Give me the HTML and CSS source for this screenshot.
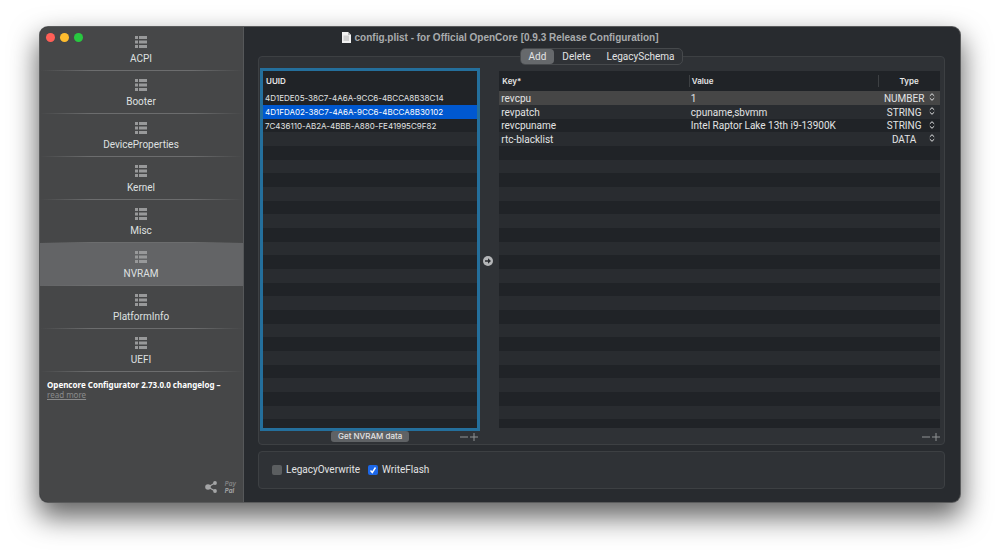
FILE: index.html
```
<!DOCTYPE html>
<html lang="en">
<head>
<meta charset="utf-8">
<meta name="viewport" content="width=device-width, initial-scale=1">
<title>config.plist - for Official OpenCore</title>
<link rel="stylesheet" href="styles.css">
</head>
<body>
<svg class="defs" aria-hidden="true">
  <symbol id="list" viewBox="0 0 12 12"><path d="M0 0h3v3H0zM4 0h8v3H4zM0 4.5h3v3H0zM4 4.5h8v3H4zM0 9h3v3H0zM4 9h8v3H4z" fill="currentColor"/></symbol>
  <symbol id="updown" viewBox="0 0 6 8"><path d="M.8 2.8 3 .7l2.2 2.1M.8 5.2 3 7.3l2.2-2.1" fill="none" stroke="currentColor" stroke-width="1"/></symbol>
  <symbol id="minus" viewBox="0 0 8 8"><path d="M0 4h8" stroke="currentColor" fill="none"/></symbol>
  <symbol id="plus" viewBox="0 0 8 8"><path d="M0 4h8M4 0v8" stroke="currentColor" fill="none"/></symbol>
</svg>
<div class="window">
  <aside class="sidebar">
    <nav class="nav">
      <a class="nav-item" href="#acpi"><svg class="nav-icon"><use href="#list"/></svg>ACPI</a>
      <a class="nav-item" href="#booter"><svg class="nav-icon"><use href="#list"/></svg>Booter</a>
      <a class="nav-item" href="#device"><svg class="nav-icon"><use href="#list"/></svg>DeviceProperties</a>
      <a class="nav-item" href="#kernel"><svg class="nav-icon"><use href="#list"/></svg>Kernel</a>
      <a class="nav-item" href="#misc"><svg class="nav-icon"><use href="#list"/></svg>Misc</a>
      <a class="nav-item selected" href="#nvram" aria-current="page"><svg class="nav-icon"><use href="#list"/></svg>NVRAM</a>
      <a class="nav-item" href="#platform"><svg class="nav-icon"><use href="#list"/></svg>PlatformInfo</a>
      <a class="nav-item" href="#uefi"><svg class="nav-icon"><use href="#list"/></svg>UEFI</a>
    </nav>
    <p class="news"><strong>Opencore Configurator 2.73.0.0 changelog –</strong><a href="#changelog">read more</a></p>
    <div class="side-foot">
      <button class="bare" type="button" aria-label="Share"><svg class="share" viewBox="0 0 12 12"><path d="M10 2 3 6l7 4" fill="none" stroke="currentColor" stroke-width="1.3"/><circle cx="3" cy="6" r="2.8" fill="currentColor"/><circle cx="10" cy="2" r="1.9" fill="currentColor"/><circle cx="10" cy="10" r="1.9" fill="currentColor"/></svg></button>
      <a class="paypal" href="#paypal"><span class="dim">Pay</span><span>Pal</span></a>
    </div>
  </aside>

  <header class="titlebar">
    <div class="lights">
      <button class="light red" type="button" aria-label="Close"></button>
      <button class="light yellow" type="button" aria-label="Minimize"></button>
      <button class="light green" type="button" aria-label="Zoom"></button>
    </div>
    <h1 class="title"><svg class="doc" viewBox="0 0 9 11"><path d="M0 0h6L9 3V11H0z" fill="#f1f1f1"/><path d="M6 0 9 3H6z" fill="#b9b9b9"/><path d="M1.500 3.500h5.500v5.500h-5.500z" fill="#cfcfcf"/></svg>config.plist - for Official OpenCore [0.9.3 Release Configuration]</h1>
  </header>

  <main class="main">
    <div class="tabs" role="tablist">
      <button class="tab active" type="button" role="tab" aria-selected="true">Add</button>
      <button class="tab" type="button" role="tab" aria-selected="false">Delete</button>
      <button class="tab" type="button" role="tab" aria-selected="false">LegacySchema</button>
    </div>
    <section class="panel lists">
      <div class="list focused">
        <table class="grid">
          <thead><tr><th>UUID</th></tr></thead>
          <tbody class="uuids">
            <tr><td>4D1EDE05-38C7-4A6A-9CC6-4BCCA8B38C14</td></tr>
            <tr class="picked"><td>4D1FDA02-38C7-4A6A-9CC6-4BCCA8B30102</td></tr>
            <tr><td>7C436110-AB2A-4BBB-A880-FE41995C9F82</td></tr>
          </tbody>
        </table>
      </div>
      <button class="bare move" type="button" aria-label="Move to right"><svg class="arrow" viewBox="0 0 10 10"><circle cx="5" cy="5" r="5" fill="#b4b6b8"/><path d="M2 4.200h3V2.300L8 5 5 7.700V5.800H2z" fill="#2b2e32"/></svg></button>
      <div class="list">
        <table class="grid">
          <colgroup><col class="c-key"><col class="c-value"><col class="c-type"></colgroup>
          <thead><tr><th>Key*</th><th>Value</th><th class="type">Type</th></tr></thead>
          <tbody>
            <tr class="current"><td>revcpu</td><td>1</td><td class="type"><select aria-label="Type of revcpu"><option>NUMBER</option></select><svg class="updown"><use href="#updown"/></svg></td></tr>
            <tr><td>revpatch</td><td>cpuname,sbvmm</td><td class="type"><select aria-label="Type of revpatch"><option>STRING</option></select><svg class="updown"><use href="#updown"/></svg></td></tr>
            <tr><td>revcpuname</td><td>Intel Raptor Lake 13th i9-13900K</td><td class="type"><select aria-label="Type of revcpuname"><option>STRING</option></select><svg class="updown"><use href="#updown"/></svg></td></tr>
            <tr><td>rtc-blacklist</td><td></td><td class="type"><select aria-label="Type of rtc-blacklist"><option>DATA</option></select><svg class="updown"><use href="#updown"/></svg></td></tr>
          </tbody>
        </table>
      </div>
      <div class="list-foot">
        <button class="get" type="button">Get NVRAM data</button>
        <div class="pair">
          <button class="bare" type="button" aria-label="Remove UUID"><svg class="sign"><use href="#minus"/></svg></button>
          <button class="bare" type="button" aria-label="Add UUID"><svg class="sign"><use href="#plus"/></svg></button>
        </div>
      </div>
      <div class="list-foot last">
        <div class="pair">
          <button class="bare" type="button" aria-label="Remove key"><svg class="sign"><use href="#minus"/></svg></button>
          <button class="bare" type="button" aria-label="Add key"><svg class="sign"><use href="#plus"/></svg></button>
        </div>
      </div>
    </section>
    <section class="panel options">
      <label class="check"><input type="checkbox">LegacyOverwrite</label>
      <label class="check"><input type="checkbox" checked>WriteFlash</label>
    </section>
  </main>
</div>
</body>
</html>
```
FILE: styles.css
```
* { box-sizing: border-box; }

body {
  margin: 0;
  padding: 27px 40px 52px;
  background: #fff;
  font-family: Roboto, "Liberation Sans", sans-serif;
  font-size: 10px;
  line-height: 12px;
  color: #e2e3e4;
}

button, select, input { font: inherit; color: inherit; margin: 0; }
.defs { display: none; }
svg { display: block; }

.bare {
  display: block;
  padding: 0;
  border: 0;
  background: none;
}

.window {
  display: grid;
  grid-template-columns: 204px minmax(0, 1fr);
  grid-template-rows: 21px auto;
  border-radius: 8px;
  overflow: hidden;
  background: #282b2f;
  box-shadow: 0 0 0 1px #5a5b5c, 0 13px 28px 2px rgba(0, 0, 0, .62);
}

/* Title bar */
.titlebar {
  grid-area: 1 / 1 / 2 / 3;
  display: grid;
  grid-template-columns: 1fr auto 1fr;
  align-items: center;
}
.lights { display: flex; gap: 5px; padding-left: 6px; }
.light {
  width: 9px;
  height: 9px;
  padding: 0;
  border: 0;
  border-radius: 50%;
}
.red { background: #ff5f57; }
.yellow { background: #febc2e; }
.green { background: #28c840; }
.title {
  display: flex;
  align-items: center;
  gap: 4px;
  margin: 0;
  font-family: "Liberation Sans", Arial, sans-serif;
  font-size: 10px;
  font-weight: 700;
  color: #a9abad;
}
.doc { width: 9px; height: 11px; }

/* Sidebar */
.sidebar {
  grid-area: 1 / 1 / 3 / 2;
  display: flex;
  flex-direction: column;
  border-right: 1px solid #56585a;
  background: #464748;
}
.nav { padding-top: 1px; }
.nav-item {
  display: flex;
  flex-direction: column;
  align-items: center;
  gap: 5px;
  height: 43px;
  padding: 8px 1px 0 0;
  background: linear-gradient(90deg, transparent, #6c6d6e 25%, #6c6d6e 75%, transparent) bottom / 100% 1px no-repeat;
  color: #dfe0e0;
  text-decoration: none;
}
.nav-item.selected { background-color: #636466; }
.nav-icon { width: 12px; height: 12px; color: #98999a; }
.news {
  margin: 0;
  padding: 8px 7px;
  font-family: "Noto Sans", "Open Sans", sans-serif;
  font-size: 8px;
  line-height: 10px;
  white-space: nowrap;
}
.news strong { display: block; color: #fff; }
.news a { color: #8a8b8c; }
.side-foot {
  display: flex;
  align-items: center;
  justify-content: flex-end;
  gap: 8px;
  margin-top: auto;
  padding: 0 7px 8px;
  color: #a4a5a6;
}
.share { width: 12px; height: 12px; }
.paypal {
  font-family: Inter, sans-serif;
  font-size: 6px;
  line-height: 7px;
  font-weight: 700;
  font-style: italic;
  color: #a4a5a6;
  text-decoration: none;
}
.paypal span { display: block; }
.paypal .dim { color: #7f8081; }

/* Content */
.main {
  grid-area: 2 / 2 / 3 / 3;
  display: flex;
  flex-direction: column;
  padding: 0 15px 13px 14px;
}
.tabs {
  display: flex;
  align-self: center;
  margin-bottom: -9px;
  border: 1px solid #46494c;
  border-radius: 5px;
  background: #2f3236;
  z-index: 1;
}
.tab {
  height: 15px;
  padding: 0 8px;
  border: 0;
  border-radius: 4px;
  background: none;
  line-height: 15px;
}
.tab.active { background: #66696c; }
.panel {
  border: 1px solid #3d4043;
  border-radius: 4px;
  background: #2f3236;
}
.lists {
  display: grid;
  grid-template-columns: 1fr 19px 2fr;
  grid-template-rows: auto 13px;
  padding: 11px 4px 0 1px;
}
.list {
  height: 363px;
  border: 3px solid transparent;
  border-width: 3px 0;
  background: repeating-linear-gradient(
    #202327 0 14px, #292c30 14px 28px, #202327 28px 41px,
    #292c30 41px 55px, #202327 55px 69px, #292c30 69px 82px) 0 20px padding-box;
}
.focused { border: 3px solid #246f9c; }
.grid {
  width: 100%;
  table-layout: fixed;
  border-collapse: collapse;
  white-space: nowrap;
}
.c-key, .c-value { width: 43%; }
.c-type { width: 14%; }
.grid th {
  height: 20px;
  padding: 0 3px;
  background: #202327;
  font-family: Inter, sans-serif;
  font-size: 8px;
  font-weight: 600;
  text-align: left;
  color: #e8e8e8;
}
.grid th + th { background: #202327 linear-gradient(#3d4043, #3d4043) 0 4px / 1px 12px no-repeat; }
.grid td { height: 14px; padding: 0 2px; line-height: 13px; }
.grid tr:nth-child(3n) td { height: 13px; }
.grid .uuids td { font-family: Inter, sans-serif; font-size: 8px; line-height: 12px; }
.picked td { background: #0058d0; color: #fff; }
.current td { background: #464646; }
.grid .type { position: relative; text-align: center; }
.type select {
  display: block;
  width: 100%;
  height: 13px;
  padding: 0 10px 0 0;
  border: 0;
  appearance: none;
  background: none;
  line-height: 13px;
  text-align-last: center;
}
.updown {
  position: absolute;
  top: 2px;
  right: 5px;
  width: 6px;
  height: 8px;
  pointer-events: none;
}
.move { align-self: center; padding: 23px 0 0 3px; }
.arrow { width: 10px; height: 10px; }
.list-foot {
  display: grid;
  grid-template-columns: 1fr auto 1fr;
  align-items: start;
}
.list-foot.last { grid-column: 3; }
.get {
  grid-column: 2;
  height: 11px;
  padding: 0 7px;
  border: 0;
  border-radius: 3px;
  background: #5f6265;
  font-family: Inter, sans-serif;
  font-size: 8px;
  font-weight: 500;
  line-height: 11px;
}
.pair {
  grid-column: 3;
  justify-self: end;
  display: flex;
  gap: 2px;
  padding: 2px 2px 0 0;
  color: #909294;
}
.last .pair { padding-right: 0; }
.sign { width: 8px; height: 8px; }

.options {
  display: flex;
  align-items: center;
  gap: 8px;
  height: 38px;
  margin-top: 6px;
  padding: 0 13px;
}
.check { display: flex; align-items: center; gap: 4px; }
.check input {
  appearance: none;
  width: 10px;
  height: 10px;
  border-radius: 2px;
  background: #5b5e60;
}
.check input:checked {
  background: #1c67e8 url("data:image/svg+xml,%3Csvg xmlns='http://www.w3.org/2000/svg' viewBox='0 0 10 10'%3E%3Cpath d='M2.500 5.500 4.300 7.500 7.500 2.500' fill='none' stroke='white' stroke-width='1.400'/%3E%3C/svg%3E") center / 10px no-repeat;
}
```
